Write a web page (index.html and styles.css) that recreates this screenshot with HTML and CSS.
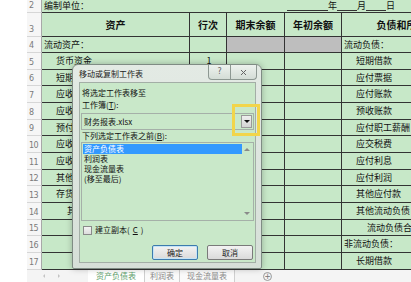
FILE: index.html
```html
<!DOCTYPE html>
<html lang="zh-CN">
<head>
    <meta charset="UTF-8">
    <title>移动或复制工作表</title>
    <link rel="stylesheet" href="styles.css">
</head>
<body>
    <div class="sheet">
        <div class="grid">
            <div class="rh">2</div>
            <div class="c r2 span2">编制单位：</div>
            <div class="c r2 span3 date"><span class="blank w41"></span>年<span class="blank w20"></span>月<span class="blank w20"></span>日</div>

            <div class="rh">3</div>
            <div class="c hd">资产</div>
            <div class="c hd">行次</div>
            <div class="c hd">期末余额</div>
            <div class="c hd">年初余额</div>
            <div class="c hd">负债和所有者权益</div>

            <div class="rh">4</div>
            <div class="c">流动资产：</div>
            <div class="c"></div>
            <div class="c gray"></div>
            <div class="c gray"></div>
            <div class="c">流动负债：</div>

            <div class="rh">5</div>
            <div class="c in1">货币资金</div>
            <div class="c num">1</div>
            <div class="c"></div>
            <div class="c"></div>
            <div class="c in1">短期借款</div>

            <div class="rh">6</div>
            <div class="c in1">短期投资</div>
            <div class="c num">2</div>
            <div class="c"></div>
            <div class="c"></div>
            <div class="c in1">应付票据</div>

            <div class="rh">7</div>
            <div class="c in1">应收票据</div>
            <div class="c num">3</div>
            <div class="c"></div>
            <div class="c"></div>
            <div class="c in1">应付账款</div>

            <div class="rh">8</div>
            <div class="c in1">应收账款</div>
            <div class="c num">4</div>
            <div class="c"></div>
            <div class="c"></div>
            <div class="c in1">预收账款</div>

            <div class="rh">9</div>
            <div class="c in1">预付账款</div>
            <div class="c num">5</div>
            <div class="c"></div>
            <div class="c"></div>
            <div class="c in1">应付职工薪酬</div>

            <div class="rh">10</div>
            <div class="c in1">应收股利</div>
            <div class="c num">6</div>
            <div class="c"></div>
            <div class="c"></div>
            <div class="c in1">应交税费</div>

            <div class="rh">11</div>
            <div class="c in1">应收利息</div>
            <div class="c num">7</div>
            <div class="c"></div>
            <div class="c"></div>
            <div class="c in1">应付利息</div>

            <div class="rh">12</div>
            <div class="c in1">其他应收款</div>
            <div class="c num">8</div>
            <div class="c"></div>
            <div class="c"></div>
            <div class="c in1">应付利润</div>

            <div class="rh">13</div>
            <div class="c in1">存货</div>
            <div class="c num">9</div>
            <div class="c"></div>
            <div class="c"></div>
            <div class="c in1">其他应付款</div>

            <div class="rh">14</div>
            <div class="c in2">其他流动资产</div>
            <div class="c num">10</div>
            <div class="c"></div>
            <div class="c"></div>
            <div class="c in1">其他流动负债</div>

            <div class="rh">15</div>
            <div class="c"></div>
            <div class="c"></div>
            <div class="c"></div>
            <div class="c"></div>
            <div class="c in2">流动负债合计</div>

            <div class="rh">16</div>
            <div class="c"></div>
            <div class="c"></div>
            <div class="c"></div>
            <div class="c"></div>
            <div class="c">非流动负债：</div>

            <div class="rh">17</div>
            <div class="c"></div>
            <div class="c"></div>
            <div class="c"></div>
            <div class="c"></div>
            <div class="c in1">长期借款</div>
        </div>

        <div class="tabs">
            <div class="nav"><i class="tri-left"></i><i class="tri-right"></i></div>
            <div class="tab active w57">资产负债表</div>
            <div class="tab w35">利润表</div>
            <div class="tab w55">现金流量表</div>
            <div class="add">+</div>
        </div>
    </div>

    <!-- dialog on top of the sheet -->
    <div class="dialog">
        <div class="dlg-title">
            <span>移动或复制工作表</span>
            <div class="caption">
                <span class="cap-help">?</span>
                <span class="cap-close">
                    <svg width="7" height="7" viewBox="0 0 7 7"><path d="M1 1L6 6M6 1L1 6" stroke="#666" stroke-width="1"/></svg>
                </span>
            </div>
        </div>
        <div class="dlg-body">
            <div class="lbl first">将选定工作表移至</div>
            <div class="lbl">工作簿(<u>T</u>):</div>
            <div class="combo">
                <span>财务报表.xlsx</span>
                <span class="combo-btn"><i class="tri-down"></i></span>
            </div>
            <div class="lbl tight">下列选定工作表之前(<u>B</u>):</div>
            <div class="list">
                <div class="items">
                    <div class="item sel">资产负债表</div>
                    <div class="item">利润表</div>
                    <div class="item">现金流量表</div>
                    <div class="item">(移至最后)</div>
                </div>
                <div class="scroll"><i class="tri-up grey"></i><i class="tri-down grey"></i></div>
            </div>
            <div class="check"><span class="box"></span>建立副本(<u>C</u>)</div>
            <div class="btns">
                <button class="btn default">确定</button>
                <button class="btn">取消</button>
            </div>
        </div>
    </div>
    <div class="hl"></div>
</body>
</html>
```

FILE: styles.css
```css
body {
    margin: 0;
    width: 411px;
    height: 282px;
    overflow: hidden;
    position: relative;
    background: #fff;
    font-family: "Noto Sans CJK SC", sans-serif;
    color: #111;
}
.sheet {
    padding-left: 27px;
}
.grid {
    display: grid;
    grid-template-columns: 15px 148px 37px 58px 57px 150px;
    grid-template-rows: 13px 24px 16px 17px 16px 17px 17px 16px 17px 17px 16px 17px 17px 16px 17px 17px;
}
.rh {
    background: #f6f6f6;
    color: #7a7a7a;
    font: 8px "DejaVu Sans", sans-serif;
    border-right: 1px solid #a8a8a8;
    border-bottom: 1px solid #d6d6d6;
    display: flex;
    align-items: flex-end;
    padding: 0 0 2px 2px;
    box-sizing: border-box;
    letter-spacing: -0.5px;
}
.c {
    background: #c7e8c8;
    border-right: 1px solid #333;
    border-bottom: 1px solid #333;
    box-sizing: border-box;
    font-size: 9px;
    line-height: 10px;
    display: flex;
    align-items: center;
    padding-left: 2px;
    white-space: nowrap;
    overflow: hidden;
}
.c.r2 {
    border-right: none;
}
.span2 {
    grid-column: span 2;
}
.span3 {
    grid-column: span 3;
}
.date {
    padding-left: 60px;
    align-items: flex-end;
    padding-bottom: 1px;
}
.blank {
    display: inline-block;
    height: 8px;
    border-bottom: 1px solid #333;
}
.w41 { width: 41px; }
.w20 { width: 20px; }
.c.in1 { padding-left: 14px; }
.c.in2 { padding-left: 25px; }
.c.num { justify-content: center; }
.c.hd {
    font-weight: bold;
    font-size: 10px;
    justify-content: center;
    padding-left: 0;
}
.c.gray { background: #bebebe; }

.tabs {
    display: flex;
    align-items: stretch;
    height: 12px;
    background: #f4f4f4;
    padding-left: 13px;
    font-size: 8px;
    line-height: 12px;
    color: #8a8a8a;
}
.nav {
    width: 48px;
    display: flex;
    align-items: center;
    gap: 13px;
    padding-left: 3px;
    box-sizing: border-box;
}
.tab {
    border-right: 1px solid #cfcfcf;
    text-align: center;
    background: #fafafa;
    box-sizing: border-box;
}
.tab.active {
    color: #5f9f6e;
    background: #fff;
}
.w57 { width: 57px; }
.w35 { width: 35px; }
.w55 { width: 55px; }
.add {
    align-self: center;
    margin-left: 28px;
    width: 9px;
    height: 9px;
    border: 1px solid #999;
    border-radius: 50%;
    box-sizing: border-box;
    font: 8px/7px "DejaVu Sans", sans-serif;
    text-align: center;
    color: #777;
}

.tri-left, .tri-right, .tri-up, .tri-down {
    display: block;
    width: 0;
    height: 0;
}
.tri-left {
    border-top: 2px solid transparent;
    border-bottom: 2px solid transparent;
    border-right: 2px solid #c4c4c4;
}
.tri-right {
    border-top: 2px solid transparent;
    border-bottom: 2px solid transparent;
    border-left: 2px solid #c4c4c4;
}
.tri-down {
    border-left: 3px solid transparent;
    border-right: 3px solid transparent;
    border-top: 3px solid #111;
}
.tri-up {
    border-left: 3px solid transparent;
    border-right: 3px solid transparent;
    border-bottom: 3px solid #111;
}
.tri-down.grey { border-top-color: #8a8a8a; }
.tri-up.grey { border-bottom-color: #8a8a8a; }

.dialog {
    position: absolute;
    left: 72px;
    top: 64px;
    width: 190px;
    height: 205px;
    box-sizing: border-box;
    border: 1px solid #7f8c84;
    border-radius: 6px 6px 2px 2px;
    background: linear-gradient(#e3eae4, #d6dfd8);
    padding: 0 5px 5px 6px;
    display: flex;
    flex-direction: column;
    box-shadow: 0 0 6px rgba(0, 0, 0, 0.25);
    font-size: 8px;
}
.dlg-title {
    height: 17px;
    display: flex;
    align-items: center;
    flex-shrink: 0;
    color: #222;
}
.caption {
    margin-left: auto;
    margin-right: -1px;
    align-self: flex-start;
    display: flex;
    height: 14px;
    border: 1px solid #8d9892;
    border-top: none;
    border-radius: 0 0 4px 4px;
    background: linear-gradient(#edf2ee, #d4ddd6);
    color: #666;
}
.cap-help {
    width: 21px;
    text-align: center;
    line-height: 13px;
    font-family: "DejaVu Sans", sans-serif;
}
.cap-close {
    width: 25px;
    border-left: 1px solid #8d9892;
    display: flex;
    align-items: center;
    justify-content: center;
}
.dlg-body {
    flex: 1;
    background: #c9e8c9;
    border: 1px solid #a3aea6;
    padding: 0 1px 0 2px;
    display: flex;
    flex-direction: column;
}
.lbl {
    line-height: 10px;
    margin-top: 2px;
}
.lbl.first { margin-top: 5px; }
.lbl.tight { margin-top: 1px; }
.combo {
    margin: 3px 0 0 -1px;
    height: 17px;
    box-sizing: border-box;
    border: 1px solid #a5b0a8;
    display: flex;
    align-items: center;
    padding-left: 2px;
}
.combo-btn {
    margin-left: auto;
    margin-right: 1px;
    width: 11px;
    height: 13px;
    box-sizing: border-box;
    background: linear-gradient(#efefef, #d4d4d4);
    border: 1px solid #9a9a9a;
    display: flex;
    align-items: center;
    justify-content: center;
}
.list {
    margin: 1px 0 0 -1px;
    height: 79px;
    box-sizing: border-box;
    border: 1px solid #a5b0a8;
    padding: 1px;
    display: flex;
}
.items {
    flex: 1;
}
.item {
    line-height: 10px;
    height: 10px;
    padding-left: 1px;
}
.item.sel {
    background: #3399ff;
    color: #fff;
}
.scroll {
    width: 10px;
    display: flex;
    flex-direction: column;
    justify-content: space-between;
    align-items: center;
    padding: 4px 0;
}
.check {
    margin-top: 4px;
    display: flex;
    align-items: center;
    gap: 3px;
    line-height: 10px;
}
.box {
    width: 7px;
    height: 7px;
    margin-left: 1px;
    border: 1px solid #8a8a8a;
    background: linear-gradient(#f4f4f4, #dcdcdc);
}
.btns {
    margin-top: auto;
    margin-bottom: 2px;
    display: flex;
    justify-content: flex-end;
    gap: 9px;
    padding-right: 1px;
}
.btn {
    width: 46px;
    height: 15px;
    padding: 0;
    font: inherit;
    font-size: 8px;
    color: #222;
    border: 1px solid #7a7a7a;
    border-radius: 2px;
    background: linear-gradient(#f3f3f3, #dadada);
}
.btn.default {
    border-color: #3d7bad;
    box-shadow: inset 0 0 0 1px #c4e4f7;
}

.hl {
    position: absolute;
    left: 232px;
    top: 104px;
    width: 28px;
    height: 32px;
    border: 3px solid #f2d54a;
    box-sizing: border-box;
}
```
